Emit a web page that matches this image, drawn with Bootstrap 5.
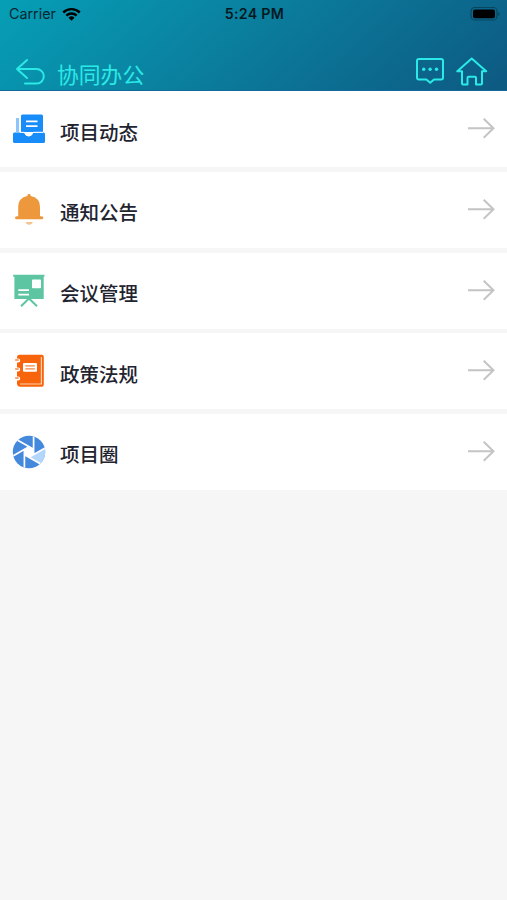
<!DOCTYPE html>
<html lang="zh-CN">
<head>
<meta charset="utf-8">
<meta name="viewport" content="width=device-width, initial-scale=1">
<title>协同办公</title>
<link href="https://cdn.jsdelivr.net/npm/bootstrap@5.3.0/dist/css/bootstrap.min.css" rel="stylesheet">
<style>
body{background:#f6f6f6;font-family:Inter,"Noto Sans CJK SC",sans-serif;color:#1f2430}
svg{display:block;flex:none}
.app-head{height:91.3px;background:linear-gradient(138deg,#069fb6 0%,#0b7b9b 50%,#0d5982 100%);border-bottom:1px solid #14699a}
.status{height:28px;font-size:14.3px;line-height:28px;color:#062731;padding:0 7px 0 9px}
.status .side{flex:1 1 0}
.clock{font-weight:600;font-size:14.2px;letter-spacing:.3px;color:#041a22}
.wifi{margin-left:6px}
.bar{height:63px;color:#2be9e6;padding:0 19px 0 15px}
.back{margin-top:30px}
.bar-title{font-family:"Noto Sans CJK SC",sans-serif;font-size:21.8px;line-height:30px;font-weight:400;margin:31px 0 0 11px}
.tools{margin-top:29px;gap:12px}
.entry{height:75.9px;padding:0 12px;background:#fff}
.entry-list{gap:4.8px}
.entry-name{font-size:19.5px;font-weight:500;line-height:28px;margin-left:14px;padding-top:7px}
</style>
</head>
<body>
<header class="app-head d-flex flex-column">
  <div class="status d-flex align-items-center">
    <div class="side d-flex align-items-center">
      <span>Carrier</span>
      <svg class="wifi" width="19" height="14" viewBox="0 0 19 14"><path d="M0.4 4.6A13 13 0 0 1 18.6 4.6L16.9 6.4A10.5 10.5 0 0 0 2.1 6.4Z"/><path d="M3.5 7.7A8.6 8.6 0 0 1 15.5 7.7L13.8 9.4A6.2 6.2 0 0 0 5.2 9.4Z"/><path d="M6.5 10.8A4.3 4.3 0 0 1 12.5 10.8L9.5 13.7Z"/></svg>
    </div>
    <span class="clock">5:24 PM</span>
    <div class="side d-flex justify-content-end">
      <svg width="31" height="16" viewBox="0 0 31 16"><rect x="2" y="1.5" width="26" height="12.5" rx="3.8" fill="none" stroke="#07475d" stroke-width="1.2"/><rect x="4" y="3.5" width="22" height="8.8" rx="2"/><path d="M29.2 6v4q1.4-.6 1.4-2t-1.4-2" fill="#07475d"/></svg>
    </div>
  </div>
  <nav class="bar d-flex align-items-start">
    <svg class="back" width="31" height="29" viewBox="0 0 31 29" fill="none" stroke="currentColor" stroke-width="2" stroke-linecap="round" stroke-linejoin="round"><path d="M12 2L2 11L12 20M2 11H21.5A7.3 7.3 0 0 1 21.5 25.6H10"/></svg>
    <h1 class="bar-title mb-0">协同办公</h1>
    <div class="tools ms-auto d-flex">
      <svg width="28" height="28" viewBox="0 0 28 28" fill="none" stroke="currentColor" stroke-width="2" stroke-linejoin="round"><path d="M3 2H25Q27 2 27 4V20.4Q27 22.4 25 22.4H18L14.2 25.8L10.4 22.4H3Q1 22.4 1 20.4V4Q1 2 3 2Z"/><g fill="currentColor" stroke="none"><circle cx="7.7" cy="12.2" r="1.7"/><circle cx="14.1" cy="12.2" r="1.7"/><circle cx="20.5" cy="12.2" r="1.7"/></g></svg>
      <svg width="32" height="30" viewBox="0 0 32 30" fill="none" stroke="currentColor" stroke-width="2" stroke-linejoin="round"><path d="M15.7 1.5L1.3 14.3H6V26.6Q6 27.6 7 27.6H11.5V20.8Q11.5 19.8 12.5 19.8H19Q20 19.8 20 20.8V27.6H25Q26 27.6 26 26.6V14.3H30.2Z"/></svg>
    </div>
  </nav>
</header>

<main class="entry-list d-flex flex-column">
  <a class="entry d-flex align-items-center text-reset text-decoration-none" href="#">
    <svg width="34" height="34" viewBox="0 0 34 34"><path d="M4 6h3v14H4z" fill="#8cc5fb"/><path d="M10.5 2.5H29.5Q31 2.5 31 4V20H9V4Q9 2.5 10.5 2.5Z" fill="#188cf8"/><path d="M14 9.3H25.5M14 14.2H25.5" stroke="#fff" stroke-width="1.8"/><path d="M2.5 20.5H12.3Q13.5 24.2 16.7 24.2T21.1 20.5H31.5Q33 20.5 33 22V29.4Q33 31 31.5 31H2.5Q1 31 1 29.4V22Q1 20.5 2.5 20.5Z" fill="#188cf8"/><path d="M8 20.3H12.3Q13.5 24 16.7 24T21.1 20.3H31" fill="none" stroke="#fff"/></svg>
    <span class="entry-name">项目动态</span>
    <svg class="ms-auto" width="28" height="22" viewBox="0 0 28 22" fill="none" stroke="#c3c4c5" stroke-width="2"><path d="M1 10.3H26M16.7 .8L26.5 10.3L16.7 19.8"/></svg>
  </a>
  <a class="entry d-flex align-items-center text-reset text-decoration-none" href="#">
    <svg width="34" height="34" viewBox="0 0 34 34"><path d="M15.4 3V2.4Q15.5 1 17 1T18.7 2.4V3Q28 4.8 28 14V23.3H29.5Q31.4 23.3 31.4 24.8T29.7 26.3H4.8Q3 26.3 3 24.8T4.8 23.3H6.2V14Q6.2 4.8 15.4 3Z" fill="#ed983c"/><path d="M13.6 29H20.8Q20 31.8 17.2 31.8T13.6 29Z" fill="#f4c38e"/></svg>
    <span class="entry-name">通知公告</span>
    <svg class="ms-auto" width="28" height="22" viewBox="0 0 28 22" fill="none" stroke="#c3c4c5" stroke-width="2"><path d="M1 10.3H26M16.7 .8L26.5 10.3L16.7 19.8"/></svg>
  </a>
  <a class="entry d-flex align-items-center text-reset text-decoration-none" href="#">
    <svg width="34" height="34" viewBox="0 0 34 34"><path d="M1.2 .8H32.5V2.7H31.7V25H2.4V2.7H1.2Z" fill="#5dc5a2"/><path d="M17 24.5L9 32.2M17 24.5L25 32.2" stroke="#5dc5a2" stroke-width="2"/><rect x="20" y="5.6" width="9" height="8.6" rx=".8" fill="#fff"/><path d="M6.3 16.2H17M6.3 20.7H17" stroke="#fff" stroke-width="1.8"/></svg>
    <span class="entry-name">会议管理</span>
    <svg class="ms-auto" width="28" height="22" viewBox="0 0 28 22" fill="none" stroke="#c3c4c5" stroke-width="2"><path d="M1 10.3H26M16.7 .8L26.5 10.3L16.7 19.8"/></svg>
  </a>
  <a class="entry d-flex align-items-center text-reset text-decoration-none" href="#">
    <svg width="34" height="34" viewBox="0 0 34 34"><path d="M7.5 .8H29.7Q31.8 .8 31.8 3V30.8Q31.8 32.8 29.7 32.8H8.5Q5 32.8 5 29.3V3.3Q5 .8 7.5 .8Z" fill="#f8640b"/><path d="M29.4 3V30H8" fill="none" stroke="#ffd0ae" stroke-width="1.2"/><rect x="11" y="9" width="14" height="8.8" rx="1" fill="#fff"/><path d="M13.3 11.9H22.8M13.3 14.9H22.8" stroke="#f8843f" stroke-width="1.2"/><path d="M4 6.6H6.2M4 15.6H6.2M4 24.6H6.2" stroke="#fff" stroke-width="4" stroke-linecap="round"/><path d="M3.6 6H6.2M3.6 15H6.2M3.6 24H6.2" stroke="#f98b4a" stroke-width="1.5" stroke-linecap="round"/></svg>
    <span class="entry-name">政策法规</span>
    <svg class="ms-auto" width="28" height="22" viewBox="0 0 28 22" fill="none" stroke="#c3c4c5" stroke-width="2"><path d="M1 10.3H26M16.7 .8L26.5 10.3L16.7 19.8"/></svg>
  </a>
  <a class="entry d-flex align-items-center text-reset text-decoration-none" href="#">
    <svg width="34" height="34" viewBox="0 0 34 34"><defs><clipPath id="disc"><circle cx="17" cy="17" r="16.2"/></clipPath></defs><g clip-path="url(#disc)"><path d="M0 0H34V34H0Z" fill="#4489dc"/><path d="M17 22.3L36 11.3V33.3Z" fill="#b4d6fb"/><path d="M17 11.7L21.6 14.35V19.65L17 22.3L12.4 19.65V14.35Z" fill="#fff"/><path d="M21.6 19.65V0M17 22.3L36 11.3M12.4 19.65L34 32.1M12.4 14.35V34M17 11.7L-2 22.7M21.6 14.35L0 1.9" stroke="#fff" stroke-width="1.7"/></g></svg>
    <span class="entry-name">项目圈</span>
    <svg class="ms-auto" width="28" height="22" viewBox="0 0 28 22" fill="none" stroke="#c3c4c5" stroke-width="2"><path d="M1 10.3H26M16.7 .8L26.5 10.3L16.7 19.8"/></svg>
  </a>
</main>
<script src="https://cdn.jsdelivr.net/npm/bootstrap@5.3.0/dist/js/bootstrap.bundle.min.js"></script>
</body>
</html>
